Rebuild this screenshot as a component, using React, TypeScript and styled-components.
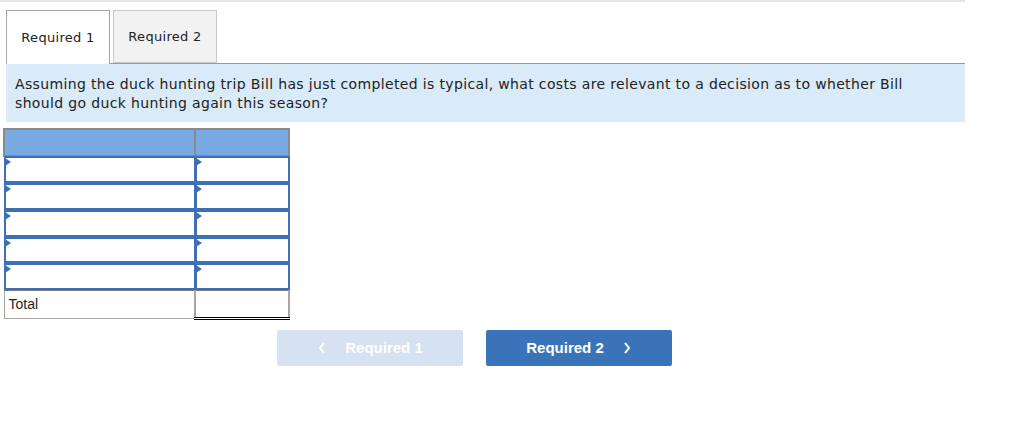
import React from "react";
import styled, { createGlobalStyle } from "styled-components";

const Global = createGlobalStyle`
  html, body { margin: 0; padding: 0; background: #fff; }
  body { font-family: "DejaVu Sans", Verdana, sans-serif; color: #222; }
`;

const Page = styled.div`
  width: 1024px;
  height: 440px;
  position: relative;
`;

const TopRule = styled.div`
  width: 965px;
  height: 2px;
  background: #e3e3e3;
`;

const TabBar = styled.div`
  display: flex;
  gap: 3px;
  margin: 8px 0 0 6px;
  width: 959px;
  border-bottom: 1px solid #9a9a9a;
  height: 53px;
`;

const Tab = styled.div<{ $active?: boolean }>`
  box-sizing: border-box;
  width: 104px;
  height: ${(p) => (p.$active ? "54px" : "53px")};
  margin-bottom: ${(p) => (p.$active ? "-1px" : "0")};
  border: 1px solid ${(p) => (p.$active ? "#a6a6a6" : "#c8c8c8")};
  border-bottom: ${(p) => (p.$active ? "none" : "1px solid #c8c8c8")};
  background: ${(p) => (p.$active ? "#fff" : "#f2f2f2")};
  display: flex;
  align-items: center;
  justify-content: center;
  font-size: 13px;
  letter-spacing: 0.3px;
  color: #222;
  padding-bottom: 1px;
`;

const Question = styled.div`
  margin-left: 6px;
  width: 959px;
  box-sizing: border-box;
  background: #d9eaf8;
  padding: 11px 9px 8px 9px;
  font-size: 14px;
  line-height: 19px;
  color: #222;
  height: 58px;
`;

const QText = styled.p`
  margin: 0;
  max-width: 905px;
  letter-spacing: 0.35px;
`;

const Table = styled.table`
  margin: 6px 0 0 3px;
  border-collapse: collapse;
  font-family: "Liberation Sans", Arial, sans-serif;
  font-size: 14px;
`;

const HeadCell = styled.th<{ $w: number }>`
  width: ${(p) => p.$w}px;
  height: 27px;
  padding: 0;
  background: #77aae3;
  border: 2px solid #8a8a8a;
  box-sizing: border-box;
`;

const InputCell = styled.td<{ $h: number }>`
  height: ${(p) => p.$h}px;
  padding: 0;
  border: 1px solid #7a7a7a;
  box-sizing: border-box;
  vertical-align: top;
`;

const InputBox = styled.div<{ $h: number }>`
  box-sizing: border-box;
  height: ${(p) => p.$h}px;
  margin: -1px;
  border: 2px solid #3f70b5;
  background: #fff;
  position: relative;
`;

const Marker = styled.span`
  position: absolute;
  left: -1px;
  top: 0px;
  width: 0;
  height: 0;
  border-top: 4px solid transparent;
  border-bottom: 4px solid transparent;
  border-left: 6px solid #3f70b5;
`;

const TotalLabel = styled.td`
  height: 26px;
  padding: 0 0 0 4px;
  border: 1px solid #a6a6a6;
  border-right: 2px solid #a6a6a6;
  color: #222;
  vertical-align: middle;
`;

const TotalValue = styled.td`
  height: 26px;
  padding: 0;
  border-top: 1px solid #000;
  border-right: 2px solid #a6a6a6;
  border-bottom: 3px double #000;
`;

const Nav = styled.div`
  display: flex;
  gap: 23px;
  margin: 10px 0 0 277px;
`;

const NavButton = styled.button<{ $disabled?: boolean }>`
  width: 186px;
  height: 36px;
  border: none;
  border-radius: 2px;
  background: ${(p) => (p.$disabled ? "#d6e2f2" : "#3b73b9")};
  color: #fff;
  font-family: "Liberation Sans", Arial, sans-serif;
  font-weight: bold;
  font-size: 15px;
  display: flex;
  align-items: center;
  justify-content: center;
  gap: 18px;
  padding: 0;
  cursor: pointer;
`;

const Chevron = styled.svg`
  width: 10px;
  height: 14px;
`;

const rows = [27, 27, 27, 26, 27];

export default function App() {
  return (
    <Page>
      <Global />
      <TopRule />
      <TabBar>
        <Tab $active>Required 1</Tab>
        <Tab>Required 2</Tab>
      </TabBar>
      <Question>
        <QText>
          Assuming the duck hunting trip Bill has just completed is typical, what costs are relevant to a decision as to whether Bill should go duck hunting again this season?
        </QText>
      </Question>
      <Table>
        <thead>
          <tr>
            <HeadCell $w={191} />
            <HeadCell $w={94} />
          </tr>
        </thead>
        <tbody>
          {rows.map((h, i) => (
            <tr key={i}>
              <InputCell $h={h}>
                <InputBox $h={h}>
                  <Marker />
                </InputBox>
              </InputCell>
              <InputCell $h={h}>
                <InputBox $h={h}>
                  <Marker />
                </InputBox>
              </InputCell>
            </tr>
          ))}
          <tr>
            <TotalLabel>Total</TotalLabel>
            <TotalValue />
          </tr>
        </tbody>
      </Table>
      <Nav>
        <NavButton $disabled>
          <Chevron viewBox="0 0 10 14">
            <path d="M7 2 L3 7 L7 12" fill="none" stroke="#fff" strokeWidth="2" />
          </Chevron>
          Required 1
        </NavButton>
        <NavButton>
          Required 2
          <Chevron viewBox="0 0 10 14">
            <path d="M3 2 L7 7 L3 12" fill="none" stroke="#fff" strokeWidth="2" />
          </Chevron>
        </NavButton>
      </Nav>
    </Page>
  );
}
